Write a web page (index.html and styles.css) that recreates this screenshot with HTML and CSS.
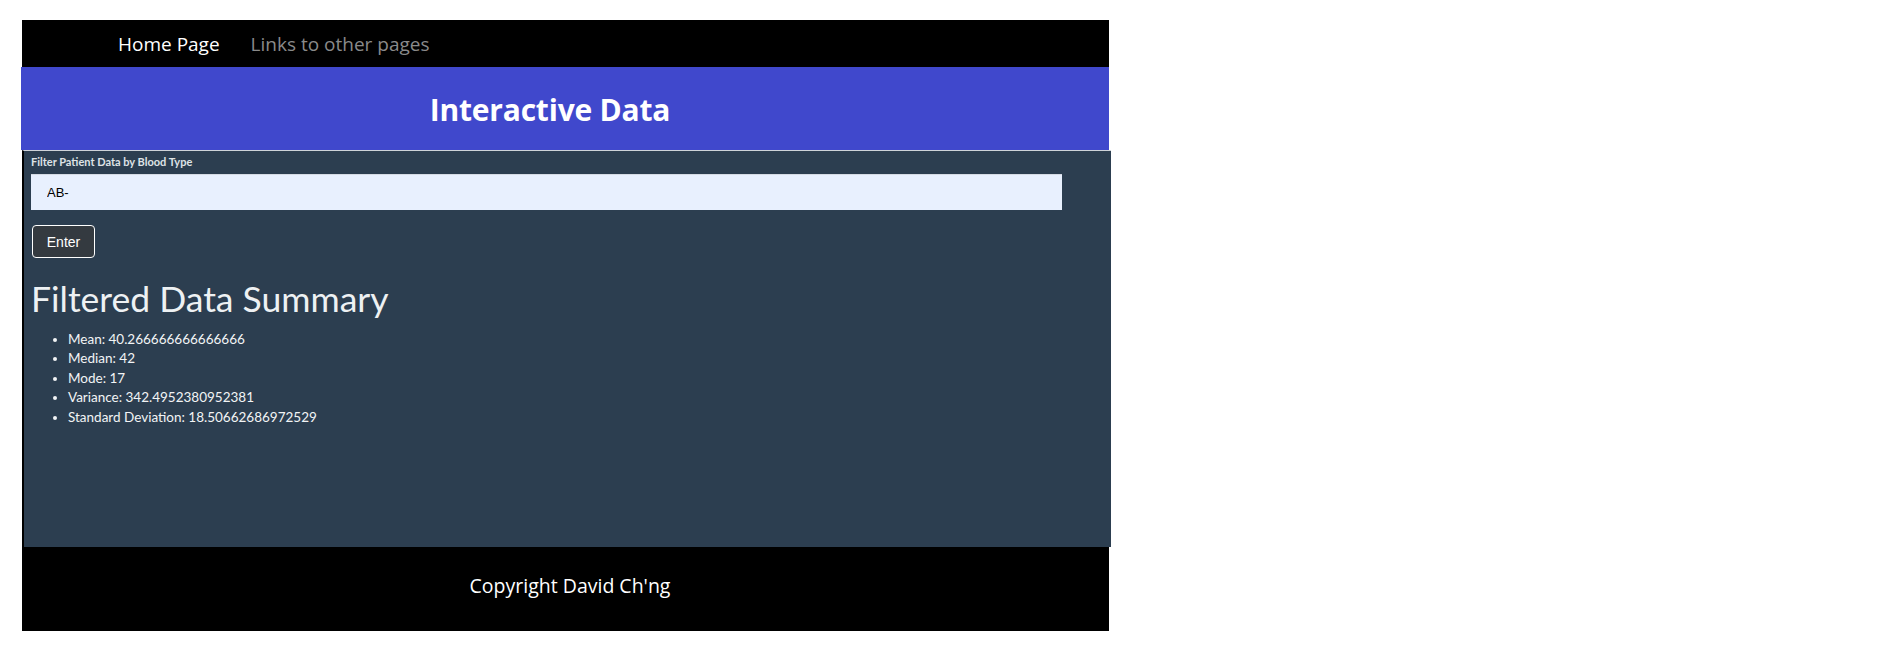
FILE: index.html
```html
<!DOCTYPE html>
<html>
<head>
<meta charset="utf-8">
<title>Interactive Data</title>
<link rel="stylesheet" href="styles.css">
</head>
<body>
<div class="page">
  <nav class="topnav">
    <a class="nav-link active" href="#">Home Page</a>
    <a class="nav-link" href="#">Links to other pages</a>
  </nav>
  <header class="banner">
    <h1 class="banner-title">Interactive Data</h1>
  </header>
  <main class="panel">
    <form class="filter-form">
      <label class="filter-label" for="blood">Filter Patient Data by Blood Type</label>
      <input class="filter-input" id="blood" type="text" value="AB-">
      <button class="enter-btn" type="button">Enter</button>
    </form>
    <h2 class="summary-title">Filtered Data Summary</h2>
    <ul class="summary-list">
      <li>Mean: 40.266666666666666</li>
      <li>Median: 42</li>
      <li>Mode: 17</li>
      <li>Variance: 342.4952380952381</li>
      <li>Standard Deviation: 18.50662686972529</li>
    </ul>
  </main>
  <footer class="site-footer">Copyright David Ch'ng</footer>
</div>
</body>
</html>
```
FILE: styles.css
```css
html, body {
  margin: 0;
  padding: 0;
  background: #ffffff;
}

.page {
  margin: 20px 0 0 22px;
  width: 1087px;
  display: flex;
  flex-direction: column;
}

.topnav {
  height: 47px;
  background: #000000;
  display: flex;
  align-items: center;
  gap: 31px;
  padding-left: 96px;
  box-sizing: border-box;
  font-family: "Open Sans", "Noto Sans", sans-serif;
  font-size: 19px;
  padding-top: 1px;
}

.nav-link {
  text-decoration: none;
  color: #8a8a8a;
}

.nav-link.active {
  color: #ffffff;
}

.banner {
  height: 83px;
  margin-left: -1px;
  background: #4048cc;
  display: flex;
  align-items: center;
  justify-content: center;
  padding-right: 30px;
}

.banner-title {
  margin: 0;
  color: #ffffff;
  font-family: "Open Sans", "Noto Sans", sans-serif;
  font-weight: 700;
  font-size: 30px;
  letter-spacing: -0.2px;
  padding-top: 2px;
}

.panel {
  width: 1089px;
  height: 397px;
  box-sizing: border-box;
  background: #2c3e50;
  border-left: 2px solid #000000;
  border-top: 1px solid #cfd3d8;
  padding: 4px 0 0 7px;
  font-family: Lato, "Open Sans", sans-serif;
  color: #ecf0f1;
}

.filter-form {
  display: flex;
  flex-direction: column;
  align-items: flex-start;
}

.filter-label {
  font-size: 11px;
  font-weight: 700;
  color: #dfe3e6;
  line-height: 14px;
  margin-bottom: 5px;
}

.filter-input {
  width: 1031px;
  height: 36px;
  box-sizing: border-box;
  border: none;
  border-top: 1px solid #d5dbe4;
  background: #e8f0fe;
  padding: 0 16px;
  font-family: "Liberation Sans", Arial, sans-serif;
  font-size: 13px;
  color: #000000;
  outline: none;
}

.enter-btn {
  margin: 15px 0 0 1px;
  width: 63px;
  height: 33px;
  box-sizing: border-box;
  background: #343a40;
  color: #ffffff;
  border: 1.5px solid #ffffff;
  border-radius: 4px;
  font-family: "Liberation Sans", Arial, sans-serif;
  font-size: 14px;
  padding: 0;
}

.summary-title {
  margin: 20px 0 0 0;
  font-weight: 400;
  font-size: 35.5px;
  line-height: 42px;
  color: #eef1f3;
}

.summary-list {
  margin: 10px 0 0 0;
  padding-left: 37px;
  font-size: 13.5px;
  line-height: 19.4px;
  color: #f2f4f5;
}

.site-footer {
  height: 84px;
  background: #000000;
  color: #ffffff;
  display: flex;
  align-items: center;
  justify-content: center;
  padding-left: 9px;
  padding-bottom: 8px;
  box-sizing: border-box;
  font-family: "Open Sans", "Noto Sans", sans-serif;
  font-size: 19.5px;
}
```
